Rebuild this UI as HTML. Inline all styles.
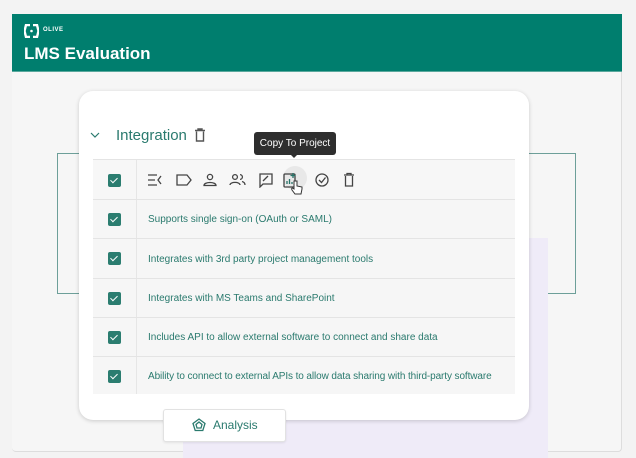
<!DOCTYPE html>
<html><head><style>
*{margin:0;padding:0;box-sizing:border-box}
body{width:636px;height:458px;overflow:hidden;background:#f3f3f3;font-family:"Liberation Sans",sans-serif;position:relative}
.abs{position:absolute}
.hdr{left:12px;top:14px;width:610px;height:58px;background:#007e6e;color:#fff;border-bottom:1px solid #5aa89d}
.panel{left:12px;top:72px;width:610px;height:380px;background:#f6f6f6;border-right:1px solid #ddd;border-bottom:1px solid #ddd;border-radius:0 0 4px 4px}
.card{left:79px;top:91px;width:450px;height:329px;background:#fff;border-radius:14px;box-shadow:0 1px 4px rgba(0,0,0,.18)}
.row{position:absolute;left:93px;width:422px;background:#f6f6f6;border-top:1px solid #e4e4e4}
.cb{position:absolute;left:15px;width:13px;height:13px;background:#2b7d70;border-radius:2px}
.cb:after{content:"";position:absolute;left:4px;top:2px;width:3px;height:6px;border:solid #fff;border-width:0 1.5px 1.5px 0;transform:rotate(45deg)}
.sep{position:absolute;left:43px;top:0;bottom:0;border-left:1px solid #e6e6e6}
.txt{position:absolute;left:55px;font-size:10px;color:#2a7a6e}
.ic{position:absolute;top:12px}
</style></head><body>
<div class="abs panel"></div>
<div class="abs hdr">
 <svg class="abs" style="left:12px;top:10px" width="15" height="14" viewBox="0 0 15 14"><path d="M6 1 L2 1 L0.5 7 L2 13 L6 13 M9 1 L13 1 L14.5 7 L13 13 L9 13" fill="none" stroke="#fff" stroke-width="2.4"/><circle cx="7.5" cy="7" r="1.3" fill="#fff"/></svg>
 <div class="abs" style="left:31px;top:13px;font-size:6px;font-weight:bold;letter-spacing:.5px">OLIVE</div>
 <div class="abs" style="left:12px;top:30px;font-size:17px;font-weight:bold">LMS Evaluation</div>
</div>
<div class="abs" style="left:57px;top:153px;width:519px;height:141px;border:1px solid #6d9f99"></div>
<div class="abs" style="left:183px;top:238px;width:365px;height:220px;background:#efebf8"></div>
<div class="abs card"></div>
<svg class="abs" style="left:90px;top:131px" width="10" height="8"><path d="M1 2 L5 6 L9 2" fill="none" stroke="#2a7a6e" stroke-width="1.2"/></svg>
<div class="abs" style="left:116px;top:127px;font-size:15px;color:#2a7a6e">Integration</div>
<svg class="abs" style="left:194px;top:128px" width="12" height="14"><path d="M1 2.5H11M4 2.5V1H8V2.5M2.5 3.5V13H9.5V3.5" fill="none" stroke="#555" stroke-width="1.4"/></svg>
<div class="row" style="top:159px;height:40px;background:#f7f7f7"><div class="cb" style="top:14px"></div><div class="sep"></div>
<svg class="ic" style="left:54px" width="230" height="16" viewBox="0 0 230 16" fill="none" stroke="#444" stroke-width="1.3">
<path d="M1 3H10M1 8H8M1 13H10M14 4L11 8L14 12"/>
<path d="M30 3H40L44 8L40 13H30Z"/>
<circle cx="63" cy="5" r="2.6"/><path d="M57 13.5C57 9.5 69 9.5 69 13.5Z"/>
<circle cx="88" cy="5" r="2.4"/><path d="M83 13C83 9.5 93 9.5 93 13M93 2.6A2.4 2.4 0 0 1 93 7.4M95 9.5C97 10 98 11.5 98 13"/>
<path d="M113 2H125V12H116L113 15Z"/><path d="M116 9L121 4"/>
<rect x="137" y="2" width="11" height="13" rx="1"/><path d="M140 12V9M142.5 12V7M145 12V10M146 1V6M143.5 3.5H148.5" stroke="#2a7a6e"/>
<circle cx="175" cy="8" r="6"/><path d="M172 8L174.5 10.5L178.5 5.5"/>
<path d="M197 3H207M200 3V1.5H204V3M198.5 4V14H205.5V4"/>
</svg>
</div>
<div class="abs" style="left:283px;top:166px;width:24px;height:24px;border-radius:50%;background:rgba(0,0,0,.06)"></div>
<svg class="abs" style="left:291px;top:180px" width="12" height="15"><path d="M3 1V9L1.5 8C0.5 8 0.5 9 1 10L4 14H10L11 9V7L6 6V1Z" fill="#fff" stroke="#333" stroke-width="1"/></svg>
<div class="row" style="top:199px;height:40px"><div class="cb" style="top:13px"></div><div class="sep"></div><div class="txt" style="top:14px">Supports single sign-on (OAuth or SAML)</div></div>
<div class="row" style="top:238px;height:40px"><div class="cb" style="top:13px"></div><div class="sep"></div><div class="txt" style="top:15px">Integrates with 3rd party project management tools</div></div>
<div class="row" style="top:278px;height:39px"><div class="cb" style="top:13px"></div><div class="sep"></div><div class="txt" style="top:14px">Integrates with MS Teams and SharePoint</div></div>
<div class="row" style="top:317px;height:39px"><div class="cb" style="top:13px"></div><div class="sep"></div><div class="txt" style="top:14px">Includes API to allow external software to connect and share data</div></div>
<div class="row" style="top:356px;height:38px"><div class="cb" style="top:13px"></div><div class="sep"></div><div class="txt" style="top:14px;letter-spacing:-.1px">Ability to connect to external APIs to allow data sharing with third-party software</div></div>
<div class="abs" style="left:254px;top:132px;width:82px;height:23px;background:#2e2e2e;border-radius:3px;color:#fff;font-size:10px;line-height:23px;text-align:center">Copy To Project</div>
<div class="abs" style="left:291px;top:155px;border:3px solid transparent;border-top-color:#2e2e2e"></div>
<div class="abs" style="left:163px;top:409px;width:123px;height:33px;background:#fff;border:1px solid #e2e2e2;border-radius:3px;box-shadow:0 1px 2px rgba(0,0,0,.08)"></div>
<svg class="abs" style="left:192px;top:418px" width="14" height="14" viewBox="0 0 14 14" fill="none" stroke="#2a7a6e" stroke-width="1.3"><path d="M7 1L13 5.5L10.8 12.5H3.2L1 5.5Z"/><path d="M7 4L10 6.5L9 10H5L4 6.5Z"/></svg>
<div class="abs" style="left:213px;top:418px;font-size:12px;color:#2a7a6e">Analysis</div>
</body></html>
